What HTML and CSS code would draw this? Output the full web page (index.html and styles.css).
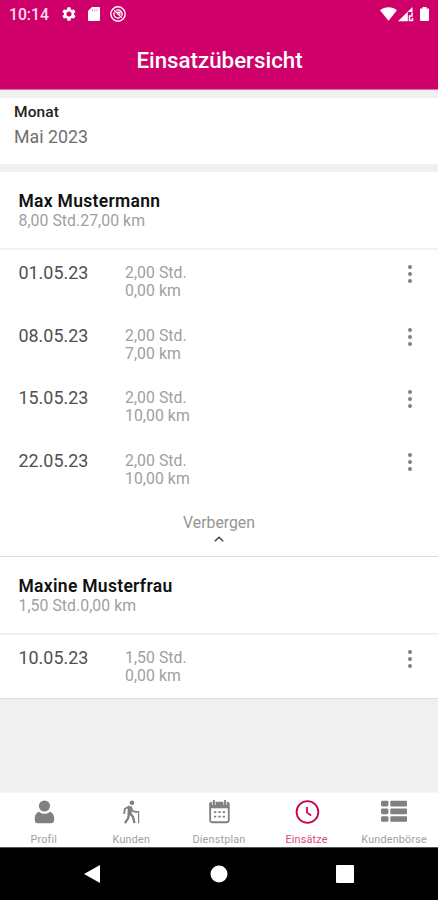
FILE: index.html
```html
<!DOCTYPE html>
<html lang="de">
<head>
    <meta charset="UTF-8">
    <meta name="viewport" content="width=device-width, initial-scale=1.0">
    <title>Einsatzübersicht</title>
    <link rel="stylesheet" href="styles.css">
</head>
<body>

    <header class="header">
        <div class="status-bar">
            <span class="time">10:14</span>
            <svg class="gear" width="16" height="16" viewBox="0 0 24 24"><path fill="#fff" fill-rule="evenodd" d="M19.4 13a7.500 7.500 0 0 0 0-2l2.100-1.600a.5.5 0 0 0 .1-.6l-2-3.500a.5.5 0 0 0-.6-.2l-2.500 1a7.300 7.300 0 0 0-1.700-1l-.4-2.600a.5.5 0 0 0-.5-.5h-4a.5.5 0 0 0-.5.5L9 5.100a7.300 7.300 0 0 0-1.700 1l-2.500-1a.5.5 0 0 0-.6.2l-2 3.500a.5.5 0 0 0 .1.6L4.500 11a7.500 7.500 0 0 0 0 2l-2.200 1.600a.5.5 0 0 0-.1.6l2 3.500c.1.200.4.300.6.200l2.500-1a7.300 7.300 0 0 0 1.700 1l.4 2.600c0 .3.200.5.500.5h4c.3 0 .5-.2.500-.5l.4-2.600a7.300 7.300 0 0 0 1.700-1l2.500 1c.2.100.5 0 .6-.2l2-3.500a.5.5 0 0 0-.1-.6zM12 15.800a3.800 3.800 0 1 1 0-7.600 3.800 3.800 0 0 1 0 7.600z"/></svg>
            <svg class="sd" width="12" height="14" viewBox="0 0 12 14"><path fill="#fff" d="M4 0h7a1 1 0 0 1 1 1v12a1 1 0 0 1-1 1H1a1 1 0 0 1-1-1V4z"/><path stroke="#cf006a" stroke-opacity=".4" d="M4.500 2v2.500M6.800 2v2.500M9 2v2.500"/></svg>
            <svg class="sync" width="16" height="16" viewBox="0 0 16 16" fill="none" stroke="#fff"><circle cx="8" cy="8" r="7.200" stroke-width="1.400"/><path stroke-width="1.300" d="M4.200 4.200l7.600 7.600M6.200 4.300a4.200 4.200 0 0 1 5.600 5.400M9.800 11.700a4.200 4.200 0 0 1-5.600-5.400M7.500 6.200l2.300.2.100 2"/></svg>
            <svg class="signals" width="50" height="16" viewBox="0 0 50 16"><path fill="#fff" d="M0 4.200C4.600.2 12.400.2 17 4.200L8.500 14.700z"/><path fill="#fff" d="M18 15.200L32.500 1v5h-4.700v9.200z"/><path stroke="#fff" stroke-width="1.500" fill="none" d="M32 6.500v3.500h-2.500v4.500h3v-2.500"/><path fill="#fff" d="M42.500 1h4v1.500H49V14a1 1 0 0 1-1 1h-7a1 1 0 0 1-1-1V2.500h2.500z"/></svg>
        </div>
        <h1>Einsatzübersicht</h1>
    </header>

    <main class="content">
        <section class="month">
            <div class="month-label">Monat</div>
            <div class="month-value">Mai 2023</div>
        </section>

        <section class="client">
            <div class="client-head">
                <h2>Max Mustermann</h2>
                <p>8,00 Std.27,00 km</p>
            </div>
            <ul class="visits">
                <li><span class="date">01.05.23</span><span class="amount">2,00 Std.<br>0,00 km</span><span class="dots"><i></i><i></i><i></i></span></li>
                <li><span class="date">08.05.23</span><span class="amount">2,00 Std.<br>7,00 km</span><span class="dots"><i></i><i></i><i></i></span></li>
                <li><span class="date">15.05.23</span><span class="amount">2,00 Std.<br>10,00 km</span><span class="dots"><i></i><i></i><i></i></span></li>
                <li><span class="date">22.05.23</span><span class="amount">2,00 Std.<br>10,00 km</span><span class="dots"><i></i><i></i><i></i></span></li>
            </ul>
            <div class="collapse">
                <span>Verbergen</span>
                <svg width="10" height="6" viewBox="0 0 10 6"><path fill="none" stroke="#444" stroke-width="1.500" d="M.8 5.300L5 1.200l4.200 4.100"/></svg>
            </div>
        </section>

        <section class="client">
            <div class="client-head">
                <h2>Maxine Musterfrau</h2>
                <p>1,50 Std.0,00 km</p>
            </div>
            <ul class="visits">
                <li><span class="date">10.05.23</span><span class="amount">1,50 Std.<br>0,00 km</span><span class="dots"><i></i><i></i><i></i></span></li>
            </ul>
        </section>
    </main>

    <nav class="tabs">
        <div class="tab">
            <svg width="28" height="28" viewBox="0 0 28 28" fill="#808080"><circle cx="14.500" cy="7.500" r="6"/><path d="M8.500 13.700c3.500 3 8.500 3 12 0 3 .8 4.500 3.500 4.500 7.800 0 3-1 4.500-3 4.500H7c-2 0-3-1.500-3-4.500 0-4.300 1.500-7 4.500-7.800z"/></svg>
            <span>Profil</span>
        </div>
        <div class="tab">
            <svg width="28" height="28" viewBox="0 0 28 28" fill="none" stroke="#808080"><circle cx="15" cy="4" r="2.500" fill="#808080" stroke="none"/><path stroke-width="4.500" d="M12.800 8l-.3 8.500"/><path stroke-width="2" d="M12.500 8L7.500 10.500l-1 5.500M13.500 8.200l2.500 4.800 4.500 1.300"/><path stroke-width="2.500" d="M11.800 15.500l-.8 5L7.500 26M13 15.500l3.300 4 1.300 6.500"/><path stroke-width="1.300" d="M19 13.500h3.200V26"/></svg>
            <span>Kunden</span>
        </div>
        <div class="tab">
            <svg width="28" height="28" viewBox="0 0 28 28"><rect x="4.500" y="4" width="20" height="21" rx="2" fill="none" stroke="#808080" stroke-width="2"/><path fill="#808080" d="M4 4h21v6H4z"/><path stroke="#fff" stroke-width="3.500" d="M8.500 2v4.500M20.500 2v4.500"/><path stroke="#808080" stroke-width="2" d="M8.500 1v5.500M20.500 1v5.500"/><path stroke="#808080" stroke-width="2" stroke-dasharray="2.600 2.100" d="M8.500 14.200h12M8.500 19h12"/></svg>
            <span>Dienstplan</span>
        </div>
        <div class="tab active">
            <svg width="28" height="28" viewBox="0 0 28 28" fill="none" stroke="#cf0052"><circle cx="14.500" cy="14" r="11.700" stroke-width="2"/><path stroke-width="1.900" d="M14 8.500v6.200l4.500 3"/></svg>
            <span>Einsätze</span>
        </div>
        <div class="tab">
            <svg class="list" width="28" height="28" viewBox="0 0 28 28" fill="#808080"><rect x="0" y="2" width="8" height="6" rx="1.500"/><rect x="10" y="2" width="18" height="6" rx="1"/><rect x="0" y="10.300" width="8" height="6" rx="1.500"/><rect x="10" y="10.300" width="18" height="6" rx="1"/><rect x="0" y="18.500" width="8" height="6" rx="1.500"/><rect x="10" y="18.500" width="18" height="6" rx="1"/></svg>
            <span>Kundenbörse</span>
        </div>
    </nav>

    <footer class="android-nav">
        <svg width="18" height="20" viewBox="0 0 18 20"><path fill="#fff" d="M1 10L17 1v18z"/></svg>
        <svg width="18" height="18" viewBox="0 0 18 18"><circle cx="9" cy="9" r="8.500" fill="#fff"/></svg>
        <svg width="18" height="18" viewBox="0 0 18 18"><rect width="18" height="18" rx="1" fill="#fff"/></svg>
    </footer>

</body>
</html>
```
FILE: styles.css
```css
* {
    box-sizing: border-box;
    margin: 0;
    padding: 0;
}

body {
    display: flex;
    flex-direction: column;
    height: 900px;
    background: #f0f0f0;
    font-family: Roboto, sans-serif;
    overflow: hidden;
}

.header {
    height: 90px;
    background: #cf006a;
    border-bottom: 1px solid #d9709f;
    color: #fff;
}

.status-bar {
    display: flex;
    align-items: center;
    height: 28px;
    padding: 0 8px 0 9px;
}

.time {
    width: 52px;
    font-size: 15.7px;
    font-weight: 500;
    color: #ffdcec;
}

.sd { margin-left: 11px; }
.sync { margin-left: 10px; }
.signals { margin-left: auto; }

h1 {
    font-size: 22.3px;
    font-weight: 500;
    line-height: 26px;
    text-align: center;
    padding: 19px 0 0 1px;
}

.content {
    flex: 1;
}

.month {
    height: 66px;
    margin-top: 8px;
    margin-bottom: 8px;
    padding: 5px 14px;
    background: #fff;
}

.month-label {
    font-size: 15.5px;
    font-weight: 500;
    line-height: 19px;
    letter-spacing: 0.1px;
    color: #222;
}

.month-value {
    font-size: 17.8px;
    line-height: 22px;
    margin-top: 4px;
    color: #707070;
}

.client {
    background: #fff;
    border-bottom: 1px solid #ddd;
}

.client-head {
    height: 78px;
    padding: 20px 18.5px 0;
    border-bottom: 2px solid #f1f1f1;
}

.client-head h2 {
    font-size: 17.5px;
    font-weight: 600;
    line-height: 19px;
    letter-spacing: 0.3px;
    color: #111;
}

.client-head p {
    font-size: 15.8px;
    line-height: 19px;
    letter-spacing: 0.05px;
    color: #a0a0a0;
}

.visits {
    list-style: none;
}

.visits li {
    display: flex;
    height: 62.5px;
    padding: 13px 26px 0 18.5px;
}

.date {
    width: 106.5px;
    font-size: 17.9px;
    line-height: 20px;
    color: #505050;
}

.amount {
    flex: 1;
    font-size: 15.8px;
    line-height: 18px;
    letter-spacing: 0.05px;
    padding-top: 1px;
    color: #a0a0a0;
}

.dots {
    display: flex;
    flex-direction: column;
    gap: 3px;
    padding-top: 2px;
}

.dots i {
    width: 4px;
    height: 4px;
    border-radius: 50%;
    background: #808080;
}

.collapse {
    display: flex;
    flex-direction: column;
    align-items: center;
    height: 56px;
    padding-top: 14px;
    font-size: 15.8px;
    line-height: 18px;
    color: #959595;
}

.collapse svg {
    margin-top: 4px;
}

.tabs {
    display: flex;
    height: 55px;
    background: #fff;
    border-top: 1px solid #f5f5f5;
}

.tab {
    display: flex;
    flex-direction: column;
    align-items: center;
    width: 20%;
    padding-top: 6px;
    font-size: 10.8px;
    line-height: 12px;
    letter-spacing: 0.2px;
    color: #a0a0a0;
}

.tab svg {
    height: 26px;
    width: 26px;
}

.tab .list {
    width: 28px;
    height: 26px;
}

.tab span {
    margin-top: 9px;
}

.tab.active {
    color: #dc4880;
}

.android-nav {
    display: flex;
    justify-content: space-between;
    align-items: center;
    height: 53px;
    padding: 0 84px 0 83px;
    background: #000;
    border-top: 1px solid #555;
}
```
